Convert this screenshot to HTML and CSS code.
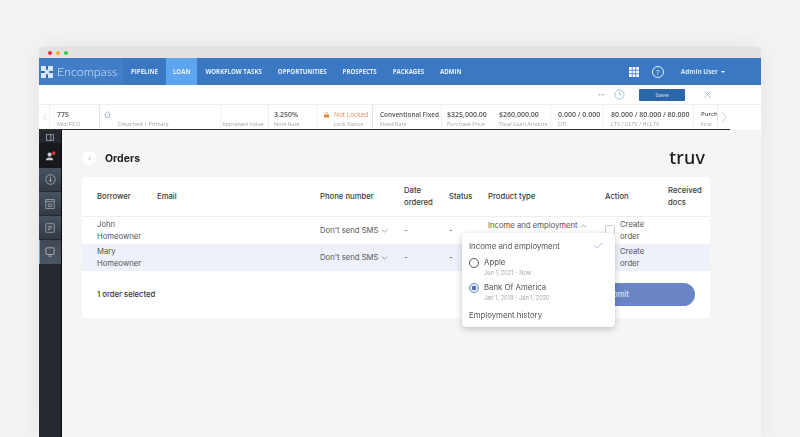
FILE: index.html
```html
<!DOCTYPE html>
<html lang="en">
<head>
<meta charset="utf-8">
<title>Orders</title>
<link rel="stylesheet" href="styles.css">
</head>
<body>
<div class="window">
  <div class="titlebar"><i class="dot red"></i><i class="dot amber"></i><i class="dot green"></i></div>
  <nav class="nav">
    <div class="brand">
      <svg class="brand-mark" viewBox="0 0 12 12" width="12" height="12"><rect width="12" height="12" fill="#d6e6f7"/><path d="M5 0h2v3.200L6 4.300 5 3.200zM5 12V8.800l1-1.100 1 1.100V12zM0 5h3.200L4.300 6 3.200 7H0zM12 5H8.800L7.700 6l1.100 1H12z" fill="#2f6cb5"/></svg>
      <span class="brand-name">Encompass</span>
    </div>
    <a class="nav-link">PIPELINE</a>
    <a class="nav-link active">LOAN</a>
    <a class="nav-link">WORKFLOW TASKS</a>
    <a class="nav-link">OPPORTUNITIES</a>
    <a class="nav-link">PROSPECTS</a>
    <a class="nav-link">PACKAGES</a>
    <a class="nav-link">ADMIN</a>
    <div class="nav-right">
      <svg class="apps" viewBox="0 0 10 10" width="10" height="10" fill="#fff"><rect width="2.800" height="2.800"/><rect x="3.600" width="2.800" height="2.800"/><rect x="7.200" width="2.800" height="2.800"/><rect y="3.600" width="2.800" height="2.800"/><rect x="3.600" y="3.600" width="2.800" height="2.800"/><rect x="7.200" y="3.600" width="2.800" height="2.800"/><rect y="7.200" width="2.800" height="2.800"/><rect x="3.600" y="7.200" width="2.800" height="2.800"/><rect x="7.200" y="7.200" width="2.800" height="2.800"/></svg>
      <span class="help">?</span>
      <span class="user">Admin User</span><i class="caret"></i>
    </div>
  </nav>
  <div class="toolbar">
    <span class="more">•••</span>
    <svg class="clock" viewBox="0 0 12 12" width="11" height="11" fill="none" stroke="#8fb0d8" stroke-width=".9"><circle cx="6" cy="6" r="5"/><path d="M6 3v3.200h2.200"/></svg>
    <button class="save">Save</button>
    <svg class="close" viewBox="0 0 8 8" width="7" height="7" fill="none" stroke="#8fa6c2" stroke-width=".8"><path d="M.5.5l7 7M7.500.5l-7 7"/></svg>
  </div>
  <div class="infobar">
    <div class="info-arrow left"><svg viewBox="0 0 5 10" width="4" height="8" fill="none" stroke="#d3d3d3" stroke-width=".8"><path d="M4.500.5L.5 5l4 4.500"/></svg></div>
    <div class="cell c-fico"><b>775</b><small>Mid-FICO</small></div>
    <div class="cell c-home">
      <svg class="house" viewBox="0 0 10 10" width="7" height="7" fill="none" stroke="#7f9cc0" stroke-width=".9"><path d="M.8 4.600L5 1l4.200 3.600M2 4v5h6V4"/></svg>
      <small>Detached | Primary</small>
    </div>
    <div class="cell c-appr"><b>&nbsp;</b><small>Appraised Value</small></div>
    <div class="cell c-rate"><b>3.250%</b><small>Note Rate</small></div>
    <div class="cell c-lock"><b class="unlocked"><svg viewBox="0 0 8 8" width="5" height="6" fill="#e58a3c"><rect y="3" width="8" height="5" rx=".6"/><path d="M1.800 3V2a2.200 2.200 0 0 1 4.400 0v1" fill="none" stroke="#e58a3c" stroke-width=".9"/></svg>Not Locked</b><small class="lock-label">Lock Status</small></div>
    <div class="cell c-fixed"><b>Conventional Fixed</b><small>Fixed Rate</small></div>
    <div class="cell c-price"><b>$325,000.00</b><small>Purchase Price</small></div>
    <div class="cell c-loan"><b>$260,000.00</b><small>Total Loan Amount</small></div>
    <div class="cell c-dti"><b>0.000 / 0.000</b><small>DTI</small></div>
    <div class="cell c-ltv"><b>80.000 / 80.000 / 80.000</b><small>LTV / CLTV / HCLTV</small></div>
    <div class="cell c-purch"><b>Purch</b><small>First</small></div>
    <div class="info-arrow right"><svg viewBox="0 0 5 10" width="5" height="10" fill="none" stroke="#b9b9b9" stroke-width=".7"><path d="M.5.5l4 4.500-4 4.500"/></svg></div>
  </div>
  <div class="body">
    <aside class="sidebar">
      <div class="side-top">
        <svg viewBox="0 0 10 8" width="8" height="7" fill="none" stroke="#b6bcc4" stroke-width=".9"><rect x=".5" y=".5" width="9" height="7"/><path d="M6 .5v7"/></svg>
      </div>
      <div class="side-top side-user">
        <svg viewBox="0 0 12 12" width="11" height="11"><path d="M1 10c0-2 1.600-3 4-3s4 1 4 3zM5 6.200a2.300 2.300 0 1 0 0-4.600 2.300 2.300 0 0 0 0 4.600z" fill="#c8ccd2"/><circle cx="9.500" cy="2.300" r="2" fill="#e0363a"/></svg>
      </div>
      <div class="side-item"><svg viewBox="0 0 12 12" width="11" height="11" fill="none" stroke="#aab1ba"><circle cx="6" cy="6" r="5.200" stroke-width=".9"/><path d="M6 3v5M3.800 6.400L6 8.600l2.200-2.200" stroke-width=".9"/></svg></div>
      <div class="side-item"><svg viewBox="0 0 12 12" width="10" height="10" fill="none" stroke="#aab1ba" stroke-width=".9"><rect x="1" y=".8" width="10" height="10.400"/><path d="M1 3.200h10M4 6h4v3H4z"/></svg></div>
      <div class="side-item"><svg viewBox="0 0 12 12" width="10" height="10" fill="none" stroke="#aab1ba" stroke-width=".9"><rect x="1" y=".8" width="10" height="10.400" rx="1"/><path d="M3.500 4h5M3.500 6h5M3.500 8h3"/></svg></div>
      <div class="side-item current"><svg viewBox="0 0 12 12" width="10" height="10" fill="none" stroke="#b9bfc7" stroke-width="1"><rect x="1" y="1" width="10" height="8" rx="1.500"/><path d="M4 11h4"/></svg></div>
    </aside>
    <main class="main">
      <header class="page-head">
        <span class="back"><svg viewBox="0 0 4 6" width="3" height="5" fill="none" stroke="#777" stroke-width=".7"><path d="M3.500.5L1 3l2.500 2.500"/></svg></span>
        <h1 class="page-title">Orders</h1>
        <span class="truv">truv</span>
      </header>
      <section class="card">
        <div class="row head">
          <div>Borrower</div><div>Email</div><div>Phone number</div><div>Date<br>ordered</div><div>Status</div><div>Product type</div><div>Action</div><div>Received<br>docs</div>
        </div>
        <div class="row body-row">
          <div>John<br>Homeowner</div><div></div>
          <div class="select">Don't send SMS <svg viewBox="0 0 8 5" width="7" height="4" fill="none" stroke="#666" stroke-width=".7"><path d="M.5.5L4 4 7.500.5"/></svg></div>
          <div>-</div><div>-</div>
          <div class="select product">Income and employment <svg viewBox="0 0 8 5" width="7" height="4" fill="none" stroke="#666" stroke-width=".7"><path d="M.5 4.500L4 1l3.500 3.500"/></svg></div>
          <div class="action"><i class="checkbox"></i><span>Create<br>order</span></div><div></div>
        </div>
        <div class="row body-row selected">
          <div>Mary<br>Homeowner</div><div></div>
          <div class="select">Don't send SMS <svg viewBox="0 0 8 5" width="7" height="4" fill="none" stroke="#666" stroke-width=".7"><path d="M.5.5L4 4 7.500.5"/></svg></div>
          <div>-</div><div>-</div><div></div>
          <div class="action"><i class="checkbox"></i><span>Create<br>order</span></div><div></div>
        </div>
        <footer class="card-foot">
          <span class="count">1 order selected</span>
          <button class="submit">Submit</button>
        </footer>
        <div class="dropdown">
          <div class="dd-head"><span>Income and employment</span><svg viewBox="0 0 10 8" width="9" height="7" fill="none" stroke="#8a9cc8" stroke-width=".7"><path d="M.5 4l3 3 6-6.500"/></svg></div>
          <div class="dd-option first"><i class="radio"></i><div><div class="dd-name">Apple</div><div class="dd-date">Jun 1, 2021 - Now</div></div></div>
          <div class="dd-option"><i class="radio on"></i><div><div class="dd-name">Bank Of America</div><div class="dd-date">Jan 1, 2018 - Jan 1, 2020</div></div></div>
          <div class="dd-foot">Employment history</div>
        </div>
      </section>
    </main>
  </div>
</div>
</body>
</html>
```

FILE: styles.css
```css
* { box-sizing: border-box; }
html, body { margin: 0; height: 437px; overflow: hidden; }
body { background: #f3f3f3; font-family: Inter, "Liberation Sans", sans-serif; color: #444; }

.window { margin: 47px 39px 0; height: 390px; display: flex; flex-direction: column; border-radius: 4px 4px 0 0; overflow: hidden; box-shadow: 0 0 24px rgba(0,0,0,.07); background: #fff; filter: blur(.4px); }

.titlebar { height: 11px; flex: none; background: #e2e2e2; display: flex; align-items: center; gap: 4px; padding: 0 0 0 9px; }
.dot { width: 4px; height: 4px; border-radius: 50%; }
.red { background: #ee2b3b; }
.amber { background: #f2ac2e; }
.green { background: #33c94a; }

.nav { height: 27px; flex: none; background: #3a78c4; display: flex; align-items: stretch; color: #e8f0fa; font-family: "Open Sans", sans-serif; }
.brand { width: 84px; display: flex; align-items: center; padding-left: 2px; background: #427ec8; }
.brand-mark { flex: none; }
.brand-name { font-family: Lato, sans-serif; font-size: 12.500px; font-weight: 300; margin-left: 4px; color: #dbe8f7; }
.nav-link { display: flex; align-items: center; padding: 0 8px; font-size: 6.100px; font-weight: 700; }
.nav-link.active { background: #5ea5ef; padding: 0 7px; }
.nav-right { margin-left: auto; display: flex; align-items: center; padding-right: 36px; }
.help { width: 12px; height: 12px; margin-left: 13px; border: 1px solid #e8f0fa; border-radius: 50%; font-size: 8px; display: flex; align-items: center; justify-content: center; }
.user { margin-left: 17px; font-size: 6.400px; font-weight: 700; color: #d9e6f6; }
.caret { margin-left: 3px; border: 2.500px solid transparent; border-top-color: #fff; border-bottom: 0; }

.toolbar { height: 20px; flex: none; display: flex; align-items: center; justify-content: flex-end; padding-right: 50px; border-bottom: 1px solid #eee; }
.more { font-size: 4px; color: #8a99ad; margin-right: 9px; }
.save { width: 46px; height: 12px; margin: 0 0 0 14px; padding: 0; border: 0; border-radius: 1px; background: #2a66a9; color: #b9cee6; font: 600 6px "Open Sans", sans-serif; }
.close { margin-left: 19px; }

.infobar { height: 25px; flex: none; display: flex; align-items: stretch; width: 722px; font-family: "Open Sans", sans-serif; background: linear-gradient(#2f2f2f,#2f2f2f) no-repeat 0 100% / 691px 1.500px, #fff; padding-bottom: 2px; white-space: nowrap; }
.cell { display: flex; flex-direction: column; justify-content: space-between; padding: 5px 0 0 7px; overflow: hidden; flex: none; border-right: 1px dotted #e6e6e6; }
.cell b { font-size: 7px; font-weight: 600; line-height: 9px; color: #555; display: block; height: 9px; }
.cell small { font-size: 5.500px; line-height: 7px; color: #a5a5a5; }
.info-arrow { flex: none; display: flex; align-items: center; }
.info-arrow.left { width: 11px; padding-left: 4px; border-right: 1px solid #f0f0f0; }
.info-arrow.right { width: 16px; padding-left: 4px; }
.c-fico { width: 50px; border-right-style: solid; }
.c-home { width: 120px; padding-left: 4px; border-right: 0; }
.c-home small { padding-left: 14px; }
.house { display: block; height: 9px; }
.c-appr { width: 49px; padding-left: 1px; border-left: 1px dotted #e6e6e6; border-right: 1px solid #eee; }
.c-rate { width: 48px; padding-left: 5px; }
.c-lock { width: 56px; border-right-style: solid; }
.c-lock .unlocked { color: #e98a6c; font-weight: 400; font-size: 6.500px; display: flex; gap: 5px; align-items: center; }
.lock-label { padding-left: 10px; }
.c-fixed { width: 69px; }
.c-fixed b { font-size: 6.400px; }
.c-price { width: 57px; padding-left: 5px; border-right: 0; }
.c-loan { width: 52px; padding-left: 0; }
.c-dti { width: 53px; }
.c-ltv { width: 90px; }
.c-purch { width: 24px; border-right: 1px solid #eee; }
.c-purch b { font-size: 6px; }

.body { flex: 1; display: flex; min-height: 0; background: #f5f5f5; }
.sidebar { width: 23px; flex: none; background: #25282e; border-right: 1px solid #0d0d0d; }
.side-top { height: 13px; display: flex; align-items: center; justify-content: center; padding-top: 1px; }
.side-user { height: 25px; background: #17191d; }
.side-item { height: 24px; display: flex; align-items: center; justify-content: center; background: linear-gradient(#475261, #323a45); border-bottom: 1px solid #242830; }
.side-item.current { border-left: 1.500px solid #6ea9ea; padding-right: 1.500px; background: linear-gradient(#3f4854, #4c5562); border-bottom: 0; }

.main { flex: 1; padding: 0 51px 0 20px; min-width: 0; }
.page-head { height: 47px; display: flex; align-items: center; padding-top: 7px; }
.back { width: 14px; height: 14px; border-radius: 50%; background: #fff; display: flex; align-items: center; justify-content: center; flex: none; margin-top: 2px; }
.page-title { margin: 2px 0 0 9px; font-size: 10.500px; font-weight: 700; color: #222; }
.truv { margin-left: auto; margin-right: 5px; font: 500 18px/1 "Noto Sans", sans-serif; letter-spacing: .1px; color: #1b1b1b; }

.card { position: relative; background: #fff; border-radius: 4px; }
.row { display: grid; grid-template-columns: 60px 163px 84px 45px 39px 117px 63px 1fr; padding-left: 15px; font-size: 7.700px; line-height: 11.500px; align-items: center; color: #555; }
.head { height: 40px; color: #3a3a3a; font-weight: 500; border-bottom: 1px solid #eee; }
.body-row { height: 27px; }
.selected { background: #eef1fa; }
.select { white-space: nowrap; }
.product { margin-bottom: 9px; }
.action { display: flex; align-items: center; gap: 5px; }
.checkbox { width: 10px; height: 11px; flex: none; border: 1px solid #ccc; border-radius: 2px; background: #fff; }
.card-foot { height: 47px; display: flex; align-items: center; justify-content: space-between; padding: 0 15px; }
.count { font-size: 7.700px; font-weight: 500; color: #333; }
.submit { width: 158px; height: 23px; padding: 0; border: 0; border-radius: 0 12px 12px 0; background: #6b86c6; color: #dfe6f5; font: 500 7.700px Inter, sans-serif; }

.dropdown { position: absolute; left: 380px; top: 56px; width: 153px; height: 94px; background: #fff; border-radius: 4px; box-shadow: 0 2px 7px rgba(0,0,0,.22); padding: 0 7px; font-size: 7.800px; color: #555; z-index: 2; }
.dd-head { height: 25px; display: flex; align-items: center; justify-content: space-between; padding-right: 5px; }
.dd-option { display: flex; gap: 5px; height: 25px; align-items: flex-start; }
.dd-option.first { height: 26px; padding-top: 1px; }
.radio { width: 10px; height: 10px; border: 1px solid #555; border-radius: 50%; flex: none; margin-top: -1px; }
.radio.on { border-color: #6b86c6; background: radial-gradient(circle, #4a6cc0 0 2px, #e5eafa 2.500px); }
.dd-name { line-height: 9px; margin-top: -1px; }
.dd-date { font-size: 5.600px; line-height: 8px; margin-top: 2px; color: #a8a8a8; }
.dd-foot { margin-top: 1px; }
```
